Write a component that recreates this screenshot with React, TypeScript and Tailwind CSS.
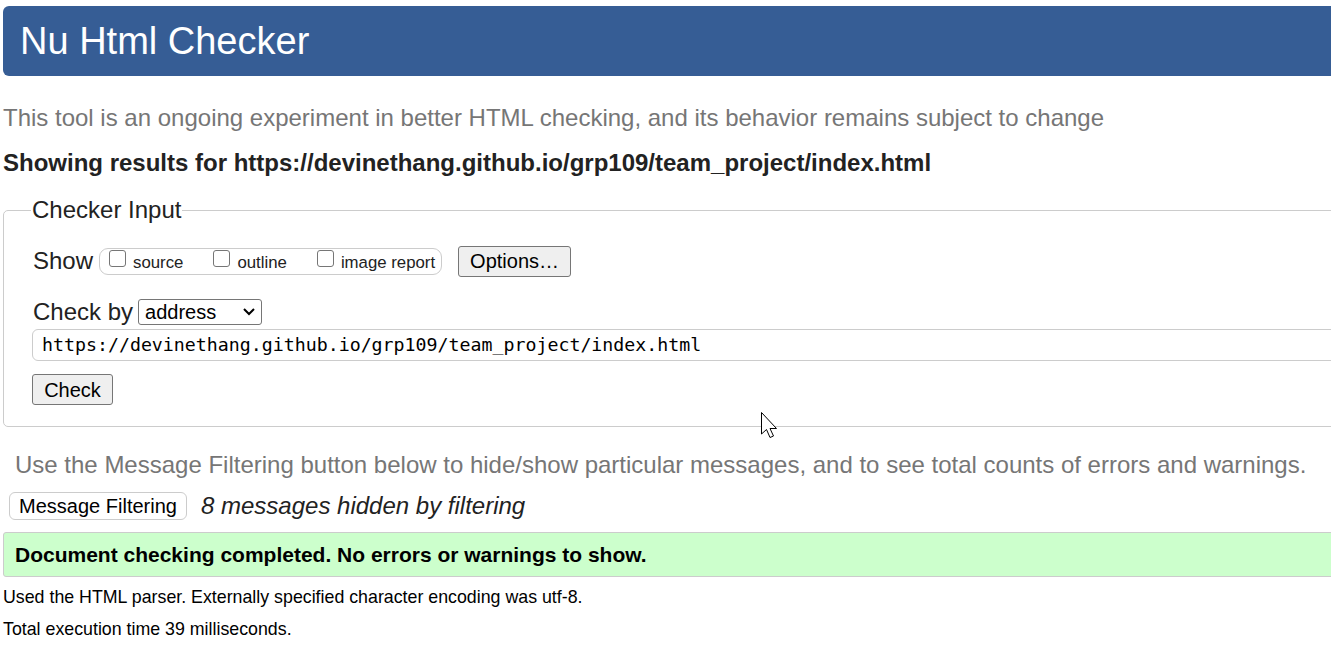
import React from "react";

function Cursor() {
  return (
    <svg className="absolute left-[761px] top-[412px]" width="20" height="30" viewBox="0 0 20 30">
      <path d="M0.5 0.5 L0.5 22 L5.5 17.5 L9 25.5 L12.5 24 L9 16.5 L15.5 16.5 Z" fill="#fff" stroke="#000" strokeWidth="1" strokeLinejoin="miter" />
    </svg>
  );
}

function Box({ label, first }: { label: string; first?: boolean }) {
  return (
    <span className={first ? "flex items-center" : "flex items-center ml-[30px]"}>
      <span className="w-[17px] h-[17px] border border-[#767676] rounded-[3px] bg-white mt-[-5px]"></span>
      <span className="ml-[7px] mt-[3px]">{label}</span>
    </span>
  );
}

export default function App() {
  return (
    <div className="relative w-[1331px] h-[646px] overflow-hidden bg-white text-[#222] [font-family:'Liberation_Sans',Arial,sans-serif]">
      <div className="w-[1400px] pl-[3px] pt-[6px]">
        <div className="h-[70px] bg-[#365d95] rounded-l-[6px] flex items-center pl-[17px]">
          <h1 className="text-white text-[38px] leading-none">Nu Html Checker</h1>
        </div>
        <p className="mt-[28px] text-[24px] leading-[28px] text-[#767676]">
          This tool is an ongoing experiment in better HTML checking, and its behavior remains subject to change
        </p>
        <p className="mt-[17px] text-[24px] leading-[28px] font-bold text-[#222]">
          Showing results for https://devinethang.github.io/grp109/team_project/index.html
        </p>
        <fieldset className="mt-[19px] border border-[#ccc] rounded-[5px] pl-[29px] pb-[21px]">
          <legend className="text-[24px] leading-[28px] px-[1px] ml-[-2px]">Checker Input</legend>
          <div className="flex items-center h-[32px] mt-[21px]">
            <span className="text-[24px] leading-[28px]">Show</span>
            <div className="ml-[6px] h-[27px] w-[343px] border border-[#ccc] rounded-[9px] flex items-center pl-[9px] text-[16.8px]">
              <Box label="source" first />
              <Box label="outline" />
              <Box label="image report" />
            </div>
            <button className="ml-[16px] h-[31px] w-[113px] bg-[#efefef] border border-[#767676] rounded-[3px] text-[20px] leading-none text-black">
              Options…
            </button>
          </div>
          <div className="flex items-center mt-[21px] h-[28px]">
            <span className="text-[24px] leading-[28px]">Check by</span>
            <div className="ml-[5px] h-[26px] w-[124px] border border-[#767676] rounded-[3px] flex items-center justify-between pl-[6px] pr-[5px] text-[20px] text-black">
              <span>address</span>
              <svg width="14" height="10" viewBox="0 0 14 10"><path d="M2 2 L7 7 L12 2" fill="none" stroke="#000" strokeWidth="2" /></svg>
            </div>
          </div>
          <div className="mt-[3px] ml-[-1px] h-[32px] border border-[#ccc] rounded-[6px] flex items-center pl-[9px] text-[18.25px] [font-family:'DejaVu_Sans_Mono',monospace] text-black">
            https://devinethang.github.io/grp109/team_project/index.html
          </div>
          <button className="mt-[13px] ml-[-1px] h-[31px] w-[81px] bg-[#efefef] border border-[#767676] rounded-[3px] text-[20px] leading-none text-black">
            Check
          </button>
        </fieldset>
        <p className="mt-[24px] ml-[12px] text-[24px] leading-[28px] text-[#767676]">
          Use the Message Filtering button below to hide/show particular messages, and to see total counts of errors and warnings.
        </p>
        <div className="flex items-center h-[28px] mt-[13px] ml-[6px]">
          <button className="h-[28px] w-[178px] bg-white border border-[#ccc] rounded-[6px] text-[20px] leading-none text-black">
            Message Filtering
          </button>
          <span className="ml-[14px] text-[24px] leading-[28px] italic">8 messages hidden by filtering</span>
        </div>
        <div className="mt-[12px] h-[45px] bg-[#ccffcc] border border-[#ccc] rounded-l-[3px] flex items-center pl-[11px] text-[21px] font-bold text-black">
          Document checking completed. No errors or warnings to show.
        </div>
        <p className="mt-[9px] text-[17.8px] leading-[22px] text-black">
          Used the HTML parser. Externally specified character encoding was utf-8.
        </p>
        <p className="mt-[10px] text-[17.8px] leading-[22px] text-black">
          Total execution time 39 milliseconds.
        </p>
      </div>
      <Cursor />
    </div>
  );
}
